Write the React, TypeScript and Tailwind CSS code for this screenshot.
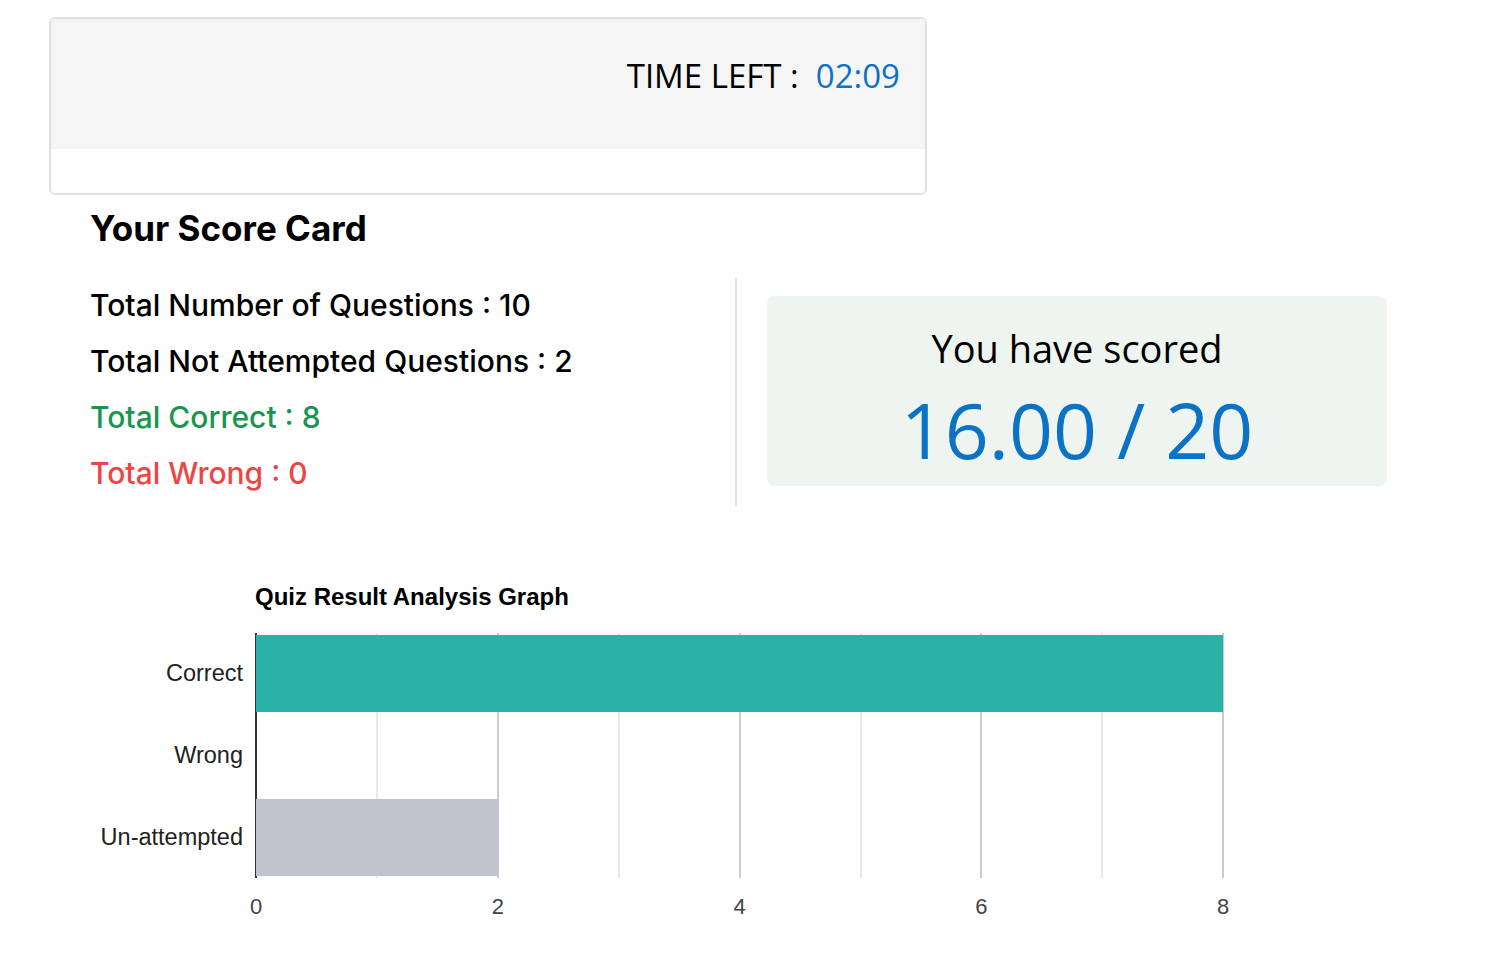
import React from "react";

const ticks = [0, 1, 2, 3, 4, 5, 6, 7, 8];
const unit = 120.9;

export default function App() {
  return (
    <div className="w-[1506px] h-[955px] bg-white overflow-hidden" style={{ fontFamily: "Inter, 'Noto Sans', sans-serif" }}>
      <div className="pl-[49px] pt-[17px]">
        {/* top card */}
        <div className="w-[878px] h-[178px] border-2 border-[#e0e0e0] rounded-[6px] overflow-hidden flex flex-col">
          <div className="h-[130px] bg-[#f5f5f5] flex justify-end items-start pt-[36px] pr-[25px]">
            <span className="text-[33px] leading-[42px] text-black" style={{ fontFamily: "'Open Sans', sans-serif" }}>
              TIME LEFT :&nbsp; <span className="text-[#0b72c4]">02:09</span>
            </span>
          </div>
          <div className="flex-1 bg-white" />
        </div>

        {/* score card */}
        <div className="pl-[41px]">
          <h2 className="mt-[11px] text-[35px] leading-[44px] font-bold text-black" style={{ fontFamily: "Inter, sans-serif" }}>Your Score Card</h2>
          <div className="flex mt-[27px]">
            <div className="w-[647px] h-[229px] border-r-2 border-[#e2e2e6] flex flex-col pt-[10px] gap-[20px]">
              <div className="text-[30px] leading-[36px] font-medium text-black">Total Number of Questions : 10</div>
              <div className="text-[30px] leading-[36px] font-medium text-black">Total Not Attempted Questions : 2</div>
              <div className="text-[30px] leading-[36px] font-medium text-[#17974e]">Total Correct : 8</div>
              <div className="text-[30px] leading-[36px] font-medium text-[#ef4444]">Total Wrong : 0</div>
            </div>
            <div className="ml-[30px] mt-[19px] w-[620px] h-[190px] bg-[#eef5f0] rounded-[8px] flex flex-col items-center pt-[29px]" style={{ fontFamily: "'Open Sans', sans-serif" }}>
              <div className="text-[38px] leading-[46px] text-black">You have scored</div>
              <div className="mt-[21px] text-[77px] leading-[76px] text-[#0b72c4]">16.00 / 20</div>
            </div>
          </div>
        </div>
      </div>

      {/* chart */}
      <div className="pl-[99px] mt-[77px]" style={{ fontFamily: "'Liberation Sans', Arial, sans-serif" }}>
        <div className="pl-[156px] text-[24px] leading-[28px] font-bold text-black">Quiz Result Analysis Graph</div>
        <div className="flex mt-[22px]">
          <div className="w-[156px] h-[245px] flex flex-col pr-[12px] text-right text-[23.5px] text-[#222]">
            <div className="flex-1 flex items-center justify-end">Correct</div>
            <div className="flex-1 flex items-center justify-end">Wrong</div>
            <div className="flex-1 flex items-center justify-end">Un-attempted</div>
          </div>
          <div className="relative w-[980px] h-[245px]">
            {ticks.map((t) => (
              <div
                key={t}
                className={t % 2 === 0 ? "absolute top-0 bottom-0 w-[2px] bg-[#cccccc]" : "absolute top-0 bottom-0 w-[2px] bg-[#e8e8e8]"}
                style={{ left: t * unit }}
              />
            ))}
            <div className="absolute left-0 top-0 bottom-0 w-[2px] bg-[#333]" />
            <div className="absolute left-[1px] top-[2px] h-[77px] bg-[#29b2a6]" style={{ width: 8 * unit }} />
            <div className="absolute left-[1px] top-[166px] h-[77px] bg-[#c0c4ce]" style={{ width: 2 * unit }} />
            {ticks.filter((t) => t % 2 === 0).map((t) => (
              <div
                key={"l" + t}
                className="absolute top-[261px] w-[40px] -ml-[20px] text-center text-[22px] leading-[26px] text-[#444]"
                style={{ left: t * unit + 1 }}
              >
                {t}
              </div>
            ))}
          </div>
        </div>
      </div>
    </div>
  );
}
